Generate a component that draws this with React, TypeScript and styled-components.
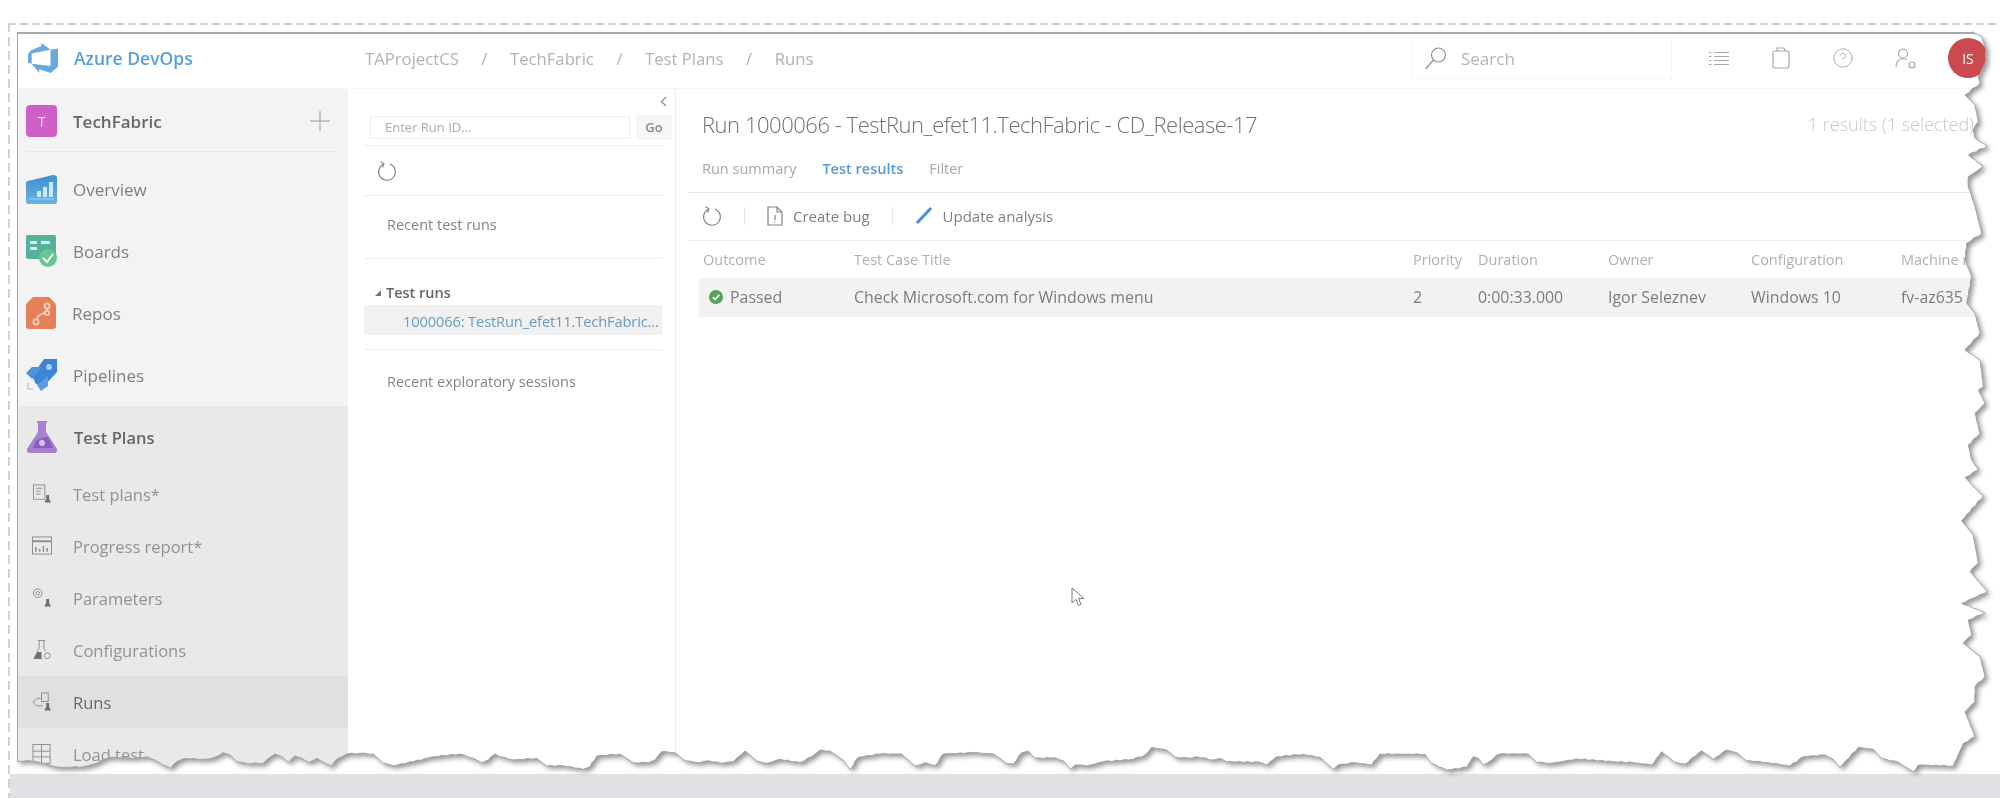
import React from "react";
import styled, { createGlobalStyle } from "styled-components";
import { CircleHelp } from "lucide-react";

const GlobalStyle = createGlobalStyle`
  html, body { margin: 0; padding: 0; background: #fff; }
  body { font-family: "Open Sans", "Noto Sans", sans-serif; color: #666; }
`;

const Page = styled.div`
  position: relative;
  width: 2000px;
  height: 798px;
  overflow: hidden;
  background: #fff;
`;

const Frame = styled.div`
  box-sizing: border-box;
  height: 798px;
  margin-top: 0;
  padding: 32px 0 0 2px;
  margin-left: 8px;
  display: grid;
  grid-template-rows: 1fr 24px;
  background:
    repeating-linear-gradient(90deg, #d2d2d2 0 8px, transparent 8px 12px) 0 23px / 100% 2px no-repeat,
    repeating-linear-gradient(180deg, #d2d2d2 0 9px, transparent 9px 14px) 0 23px / 2px 100% no-repeat;
`;

const Window = styled.div`
  margin-left: 7px;
  min-height: 0;
  overflow: hidden;
  box-sizing: border-box;
  border-top: 2px solid #a8a8a8;
  border-left: 1px solid #a0a0a0;
  display: grid;
  grid-template-rows: 55px 1fr;
  background: #fff;
  filter: blur(0.7px);
`;

const Band = styled.div`
  background: #e0e2e6;
  margin-left: 0;
`;

/* top bar */
const Header = styled.header`
  display: flex;
  align-items: center;
  padding: 0 12px 6px 0;
  border-bottom: 1px solid #f4f4f4;
`;

const Brand = styled.div`
  width: 347px;
  padding-left: 10px;
  box-sizing: border-box;
  display: flex;
  align-items: center;
  gap: 16px;
  color: #5a9fd6;
  font-size: 17.5px;
  font-weight: 600;
`;

const Crumbs = styled.nav`
  display: flex;
  align-items: center;
  gap: 22.5px;
  font-size: 16.7px;
  color: #b2b2b2;
`;

const SearchBox = styled.div`
  margin-left: auto;
  margin-right: 16px;
  width: 260px;
  height: 42px;
  box-sizing: border-box;
  border: 1px solid #f6f6f6;
  display: flex;
  align-items: center;
  gap: 14px;
  padding-left: 11px;
  font-size: 17px;
  color: #b4b4b4;
`;

const ToolSlot = styled.div`
  width: 62px;
  display: flex;
  justify-content: center;
  color: #a8a8a8;
`;

const Avatar = styled.div`
  width: 40px;
  height: 40px;
  margin-left: 12px;
  border-radius: 50%;
  background: #cb4a50;
  color: #fff;
  font-size: 14px;
  display: flex;
  align-items: center;
  justify-content: center;
`;

/* three columns under the bar */
const Body = styled.div`
  display: grid;
  grid-template-columns: 330px 327px 1fr;
  min-height: 0;
`;

const Sidebar = styled.aside`
  background: #f3f3f3;
  display: flex;
  flex-direction: column;
`;

const ProjectRow = styled.div`
  height: 63px;
  margin: 0 12px 0 8px;
  padding-top: 2px;
  box-sizing: border-box;
  border-bottom: 1px solid #e8e8e8;
  display: flex;
  align-items: center;
  gap: 16px;
  font-size: 17px;
  font-weight: 600;
  color: #666;
`;

const ProjectTile = styled.div`
  width: 31px;
  height: 32px;
  border-radius: 4px;
  background: #cf5fc4;
  color: #fff;
  font-size: 14px;
  font-weight: 400;
  display: flex;
  align-items: center;
  justify-content: center;
`;

const AddButton = styled.div`
  margin-left: auto;
  margin-right: 6px;
  display: flex;
  color: #a0a0a0;
`;

const NavList = styled.div`
  padding-top: 6px;
`;

const NavItem = styled.div`
  height: 62px;
  padding-left: 8px;
  display: flex;
  align-items: center;
  gap: 16px;
  font-size: 17px;
  color: #7f7f7f;
`;

const OpenSection = styled.div`
  flex: 1;
  background: #e9e9e9;
`;

const OpenHead = styled(NavItem)`
  color: #666;
  font-weight: 600;
  font-size: 16.5px;
`;

const SubItem = styled.div<{ $current?: boolean }>`
  height: 52px;
  padding-left: 14px;
  display: flex;
  align-items: center;
  gap: 21px;
  font-size: 16.5px;
  color: ${(p) => (p.$current ? "#6a6a6a" : "#929292")};
  background: ${(p) => (p.$current ? "#e0e0e0" : "transparent")};
`;

const SubIconBox = styled.span`
  width: 20px;
  display: flex;
  justify-content: center;
  color: #777;
`;

/* run list column */
const RunPanel = styled.section`
  padding: 0 13px 0 16px;
  font-size: 14.5px;
  color: #848484;
`;

const CollapseRow = styled.div`
  height: 25px;
  display: flex;
  align-items: center;
  justify-content: flex-end;
  margin-right: -5px;
  color: #8c8c8c;
`;

const RunSearch = styled.div`
  margin: 0 -10px 0 6px;
  display: flex;
  align-items: center;
  gap: 6px;
  padding-bottom: 5px;
`;

const RunInput = styled.div`
  width: 260px;
  height: 23px;
  box-sizing: border-box;
  border: 1px solid #efefef;
  padding-left: 14px;
  font-size: 13px;
  line-height: 21px;
  color: #acacac;
`;

const GoButton = styled.div`
  width: 36px;
  height: 26px;
  background: #f6f6f6;
  color: #8a8a8a;
  font-size: 13px;
  font-weight: 600;
  text-align: center;
  line-height: 26px;
`;

const RunSection = styled.div<{ $height: number }>`
  box-sizing: border-box;
  height: ${(p) => p.$height}px;
  border-top: 1px solid #ededed;
  display: flex;
  align-items: center;
  padding-left: 23px;
`;

const RecentSection = styled(RunSection)`
  padding-bottom: 5px;
`;

const RefreshSection = styled(RunSection)`
  padding-left: 13px;
`;

const GroupSection = styled.div`
  box-sizing: border-box;
  height: 91px;
  border-top: 1px solid #ededed;
  padding-top: 21px;
`;

const GroupTitle = styled.div`
  height: 25px;
  display: flex;
  align-items: center;
  gap: 5px;
  padding-left: 11px;
  color: #666;
  font-weight: 600;
`;

const Caret = styled.span`
  width: 0;
  height: 0;
  border-left: 6px solid transparent;
  border-bottom: 6px solid #777;
`;

const GroupRow = styled.div`
  height: 30px;
  line-height: 33px;
  background: #f1f1f1;
  padding-left: 39px;
  color: #6a9bbd;
  white-space: nowrap;
  font-size: 14.7px;
  letter-spacing: -0.15px;
`;

/* results column */
const ResultPanel = styled.main`
  border-left: 1px solid #efefef;
  padding-left: 12px;
  min-width: 0;
`;

const TitleRow = styled.div`
  margin-top: 5px;
  height: 61px;
  padding: 0 16px 2px 14px;
  box-sizing: border-box;
  margin-right: 10px;
  display: flex;
  align-items: center;
  justify-content: space-between;
`;

const RunTitle = styled.h1`
  margin: 0;
  font-size: 22px;
  font-weight: 300;
  letter-spacing: -0.47px;
  color: #707070;
  white-space: nowrap;
`;

const ResultCount = styled.span`
  font-size: 18px;
  font-weight: 300;
  color: #c8c8c8;
  white-space: nowrap;
`;

const Tabs = styled.div`
  height: 38px;
  box-sizing: border-box;
  padding: 0 0 11px 14px;
  border-bottom: 1px solid #e8e8e8;
  display: flex;
  align-items: center;
  gap: 26px;
  font-size: 14.5px;
  color: #a8a8a8;
`;

const Tab = styled.span<{ $active?: boolean }>`
  color: ${(p) => (p.$active ? "#5a9ad2" : "inherit")};
  font-weight: ${(p) => (p.$active ? 600 : 400)};
`;

const Toolbar = styled.div`
  height: 48px;
  box-sizing: border-box;
  padding: 0 0 2px 14px;
  border-bottom: 1px solid #eee;
  display: flex;
  align-items: center;
  font-size: 15px;
  color: #7e7e7e;
`;

const ToolSep = styled.span`
  width: 1px;
  height: 18px;
  background: #e6e6e6;
  margin: 0 22px;
`;

const ToolAction = styled.span`
  display: flex;
  align-items: center;
  gap: 10px;
`;

const ResultGrid = styled.div`
  margin-left: 11px;
  display: grid;
  grid-template-columns: 155px 559px 65px 130px 143px 150px 1fr;
`;

const HeadCell = styled.div`
  height: 37px;
  display: flex;
  align-items: center;
  font-size: 14.5px;
  color: #afafaf;
  white-space: nowrap;
  &:first-child { padding-left: 4px; }
`;

const Cell = styled.div`
  height: 39px;
  box-sizing: border-box;
  padding-bottom: 2px;
  background: #f2f2f2;
  display: flex;
  align-items: center;
  gap: 7px;
  font-size: 15.9px;
  color: #7c7c7c;
  white-space: nowrap;
`;

const OutcomeCell = styled(Cell)`
  padding-left: 10px;
`;

/* torn paper edge drawn over the screenshot */
const TearLayer = styled.svg`
  position: absolute;
  inset: 0;
  pointer-events: none;
`;

const Pointer = styled.svg`
  position: absolute;
  left: 1071px;
  top: 587px;
`;

type Pt = [number, number];

const at = (ox: number, oy: number, pts: Pt[]): Pt[] =>
  pts.map(([x, y]) => [ox + x / 3, oy + y / 3] as Pt);

const rightEdge: Pt[] = [
  ...at(1900, 20, [
    [215, 35], [245, 50], [258, 90], [255, 130], [235, 170], [240, 190], [195, 225], [225, 255], [235, 305],
    [220, 330], [225, 355], [262, 378], [205, 405], [250, 440], [205, 470], [205, 500], [225, 560], [245, 640],
    [200, 670], [195, 720], [215, 770], [200, 850], [225, 880], [240, 940], [195, 990], [240, 1020], [250, 1100],
  ]),
  ...at(1900, 390, [
    [235, 0], [255, 40], [225, 70], [240, 130], [205, 165], [215, 210], [235, 240], [195, 262], [225, 295],
    [250, 318], [185, 392], [220, 435], [235, 520], [210, 545], [262, 605], [185, 640], [255, 668], [205, 690],
    [215, 735], [190, 760], [240, 800], [255, 860], [225, 890], [225, 935], [195, 965], [225, 1040], [190, 1060],
  ]),
];

const bottomEdge: Pt[] = [
  ...at(1500, 730, [
    [1360, 108], [1255, 105], [1240, 125], [1195, 97], [1145, 85], [1120, 58], [1075, 52], [1020, 112], [1000, 88],
    [975, 75], [910, 80], [870, 108], [800, 97], [740, 92], [710, 68], [680, 60], [640, 88], [605, 62], [555, 102],
    [525, 97], [485, 65], [455, 105], [400, 98], [340, 95], [230, 87], [155, 100], [110, 97], [85, 72], [0, 72],
  ]),
  ...at(1000, 730, [
    [1490, 75], [1475, 90], [1450, 105], [1435, 85], [1420, 80], [1400, 112], [1340, 120], [1295, 100], [1275, 73],
    [1140, 72], [1115, 105], [1065, 98], [1015, 105], [1000, 118], [960, 82], [910, 73], [830, 80], [800, 105],
    [780, 97], [680, 95], [660, 85], [640, 90], [590, 80], [570, 85], [525, 82], [500, 60], [455, 52], [435, 75],
    [400, 88], [310, 95], [260, 108], [225, 105], [212, 117], [190, 92], [165, 83], [105, 85], [85, 63], [65, 68],
    [40, 102], [20, 100], [0, 85],
  ]),
  ...at(500, 730, [
    [1480, 72], [1420, 68], [1330, 72], [1305, 107], [1275, 98], [1245, 108], [1205, 72], [1140, 72], [1075, 82],
    [1050, 118], [1030, 90], [990, 63], [960, 60], [935, 80], [900, 98], [840, 88], [800, 100], [770, 92], [735, 63],
    [700, 95], [665, 100], [625, 92], [600, 98], [555, 92], [525, 68], [485, 65], [465, 90], [445, 98], [400, 98],
    [360, 72], [290, 78], [270, 110], [250, 118], [190, 107], [140, 108], [110, 85], [40, 90], [0, 80],
  ]),
  ...at(0, 730, [
    [1485, 72], [1465, 90], [1445, 98], [1420, 85], [1380, 72], [1300, 80], [1240, 95], [1180, 107], [1150, 100],
    [1120, 72], [1080, 70], [1040, 72], [1010, 88], [995, 108], [975, 100], [950, 85], [925, 97], [905, 85], [885, 78],
    [865, 97], [845, 80], [825, 72], [805, 85], [790, 100], [740, 100], [710, 95], [690, 75], [670, 68], [645, 82],
    [610, 88], [555, 85], [530, 95], [512, 115], [490, 105], [465, 90], [440, 80], [400, 85], [345, 82], [320, 85],
    [290, 100], [250, 110], [200, 112], [165, 110], [130, 100], [95, 93], [50, 93],
  ]),
];

// fine grain so the long straight pieces of the tear look ripped
const roughen = (pts: Pt[]): Pt[] => {
  const out: Pt[] = [];
  pts.forEach((p, i) => {
    out.push(p);
    const next = pts[i + 1];
    if (!next) return;
    const steps = Math.floor(Math.hypot(next[0] - p[0], next[1] - p[1]) / 4);
    for (let s = 1; s < steps; s++) {
      const t = s / steps;
      const wob = Math.sin(i * 7.3 + s * 2.9) * 0.55;
      out.push([p[0] + (next[0] - p[0]) * t + wob * 0.6, p[1] + (next[1] - p[1]) * t + wob]);
    }
  });
  return out;
};

const edge = roughen([...rightEdge, ...bottomEdge]);
const line = edge.map(([x, y]) => `${x.toFixed(1)},${y.toFixed(1)}`).join(" ");
const paper = `${line} 17,761 17,32`;
const offcut = (bottom: number) => `${line} 17,${bottom} 2000,${bottom} 2000,32`;

const TornEdge = () => (
  <TearLayer width="2000" height="798" viewBox="0 0 2000 798">
    <defs>
      <filter id="tearBlur" x="-5%" y="-5%" width="110%" height="110%">
        <feGaussianBlur stdDeviation="2.4" />
      </filter>
      <clipPath id="tearClip">
        <polygon points={offcut(786)} />
      </clipPath>
    </defs>
    <polygon points={offcut(774)} fill="#fff" />
    <g clipPath="url(#tearClip)">
      <polygon points={paper} fill="#555" opacity="0.62" transform="translate(3 3)" filter="url(#tearBlur)" />
    </g>
    <polyline points={line} fill="none" stroke="#a0a0a0" strokeWidth="0.9" />
  </TearLayer>
);

const AzureLogo = () => (
  <svg width="30" height="30" viewBox="0 0 24 24" fill="#6aa9dc">
    <path d="M0 8.877 2.247 5.91l8.405-3.416V.022l7.37 5.393L2.966 8.338v8.225L0 15.707zm24-4.45v14.651l-5.753 4.9-9.303-3.057v3.056l-5.978-7.416 15.057 1.798V5.415z" />
  </svg>
);

const Refresh = () => (
  <svg width="20" height="21" viewBox="0 0 20 21" fill="none" stroke="#808080" strokeWidth="1.1">
    <path d="M6.5 4.2A8.4 8.4 0 1 0 13 4" />
    <path d="M3.5 1.4 7 4l-1.6 3.6" />
  </svg>
);

const OverviewIcon = () => (
  <svg width="31" height="30" viewBox="0 0 31 30">
    <defs>
      <linearGradient id="ovr" x1="0" y1="0" x2="0" y2="1">
        <stop offset="0" stopColor="#3f8fd0" />
        <stop offset="1" stopColor="#69b4e4" />
      </linearGradient>
    </defs>
    <path d="M2 7 27 1q4 0 4 3v24q0 2-2 2H2q-2 0-2-2V9q0-2 2-2z" fill="url(#ovr)" />
    <path d="M11 17h4v6h-4zM17 13h4v10h-4zM23 8h4v15h-4z" fill="#cfe6f6" />
    <path d="M4 25h24" stroke="#9fd0ee" />
  </svg>
);

const BoardsIcon = () => (
  <svg width="31" height="32" viewBox="0 0 31 32">
    <path d="M2 0h26q2 0 2 2v20q0 2-2 2H2q-2 0-2-2V2q0-2 2-2z" fill="#57b09a" />
    <path d="M4 6h7v3H4zM4 12h7v3H4zM15 6h9v3h-9z" fill="#d5efe8" />
    <circle cx="22" cy="23" r="9" fill="#63c78f" />
    <path d="m17 23 4 4 6-8" fill="none" stroke="#fff" strokeWidth="2" />
  </svg>
);

const ReposIcon = () => (
  <svg width="30" height="32" viewBox="0 0 30 32">
    <path d="M7 0h16l6 6q1 1 1 3v20q0 3-3 3H3q-3 0-3-3V9q0-3 2-4z" fill="#e58059" />
    <g fill="none" stroke="#f7d3c4" strokeWidth="1.6">
      <circle cx="21" cy="9" r="2.6" />
      <circle cx="10" cy="25" r="2.6" />
      <circle cx="21" cy="16" r="2.2" />
      <path d="M11 22C11 16 20 18 21 12" />
    </g>
  </svg>
);

const PipelinesIcon = () => (
  <svg width="31" height="32" viewBox="0 0 31 32">
    <path d="M18 0h13v13L18 27l-8-2-4-8z" fill="#3d84d6" />
    <path d="M6 8h10L6 20 0 14z" fill="#4d92dd" />
    <path d="M22 17v10l-7 5-4-6z" fill="#5b9ee3" />
    <circle cx="23" cy="8" r="3" fill="#a9cdf1" />
    <path d="M2 24v6h5" stroke="#9fb6cc" fill="none" />
  </svg>
);

const FlaskIcon = () => (
  <svg width="32" height="32" viewBox="0 0 32 32">
    <path d="M11 0h10v2h-1v9l11 17q1 4-3 4H4q-4 0-3-4l11-17V2h-1z" fill="#a77fd3" />
    <path d="M10 20q6-4 12-4l5 11H7z" fill="#8a5cc0" />
    <circle cx="16" cy="22" r="3" fill="#d4bfe9" />
  </svg>
);

const SubIcon = ({ kind }: { kind: string }) => {
  const flask = <path d="M15 12h3v4l2 4h-7l2-4z" fill="#6f6f6f" stroke="none" />;
  return (
    <svg width="21" height="22" viewBox="0 0 21 22" fill="none" stroke="#8c8c8c" strokeWidth="1">
      {kind === "plans" && (
        <>
          <rect x="1.5" y="1.5" width="12" height="15" />
          <path d="M4 5h7M4 8h5M4 11h5" />
          {flask}
        </>
      )}
      {kind === "report" && (
        <>
          <rect x="0.5" y="1.5" width="20" height="18" />
          <path d="M.5 6h20" strokeWidth="2" />
          <path d="M4 17v-5M8 17v-3M12 17v-6M16 17v-4" strokeWidth="1.6" />
        </>
      )}
      {kind === "params" && (
        <>
          <circle cx="6" cy="6" r="4.5" />
          <circle cx="6" cy="6" r="1.8" />
          {flask}
        </>
      )}
      {kind === "configs" && (
        <>
          <path d="M6 1h8M7.5 1v8L2 20h9" />
          <path d="M12.5 1v8l1.5 3" />
          <path d="M6 13h4v7H2z" fill="#6f6f6f" stroke="none" />
          <circle cx="16" cy="17" r="3" />
        </>
      )}
      {kind === "runs" && (
        <>
          <path d="M1 11l5-4h3M1 11l4 4h6" />
          <rect x="10" y="1.5" width="7" height="9" />
          {flask}
        </>
      )}
      {kind === "load" && (
        <>
          <rect x="1" y="1" width="18" height="20" />
          <path d="M1 8h18M1 14h18M10 1v20" />
        </>
      )}
    </svg>
  );
};

const subNav = [
  { kind: "plans", label: "Test plans*" },
  { kind: "report", label: "Progress report*" },
  { kind: "params", label: "Parameters" },
  { kind: "configs", label: "Configurations" },
  { kind: "runs", label: "Runs", current: true },
  { kind: "load", label: "Load test" },
];

const columns = ["Outcome", "Test Case Title", "Priority", "Duration", "Owner", "Configuration", "Machine name"];

export default function App() {
  return (
    <Page>
      <GlobalStyle />
      <Frame>
        <Window>
          <Header>
            <Brand>
              <AzureLogo />
              Azure DevOps
            </Brand>
            <Crumbs>
              <span>TAProjectCS</span>
              <span>/</span>
              <span>TechFabric</span>
              <span>/</span>
              <span>Test Plans</span>
              <span>/</span>
              <span>Runs</span>
            </Crumbs>
            <SearchBox>
              <svg width="23" height="23" viewBox="0 0 23 23" fill="none" stroke="#8f8f8f" strokeWidth="1.2">
                <circle cx="14.5" cy="8" r="7" />
                <path d="M9.5 13 1.5 22" />
              </svg>
              Search
            </SearchBox>
            <ToolSlot>
              <svg width="20" height="15" viewBox="0 0 20 15" fill="none" stroke="#a8a8a8" strokeWidth="1.2">
                <path d="M5 1.5h15M5 5.5h15M5 9.5h15M5 13.5h15M0 1.5h2.5M0 5.5h2.5M0 9.5h2.5M0 13.5h2.5" />
              </svg>
            </ToolSlot>
            <ToolSlot>
              <svg width="18" height="22" viewBox="0 0 18 22" fill="none" stroke="#a8a8a8" strokeWidth="1.2">
                <rect x="1" y="4" width="16" height="17" rx="2" />
                <path d="M5 4V1h7l1 3" />
              </svg>
            </ToolSlot>
            <ToolSlot>
              <CircleHelp size={22} strokeWidth={1} />
            </ToolSlot>
            <ToolSlot>
              <svg width="21" height="21" viewBox="0 0 21 21" fill="none" stroke="#a8a8a8" strokeWidth="1.2">
                <circle cx="8" cy="5.5" r="4.5" />
                <path d="M1 19c0-5 3-8 7-8.5 2 0 3 .6 4 1.4" />
                <circle cx="17" cy="17" r="3" />
              </svg>
            </ToolSlot>
            <Avatar>IS</Avatar>
          </Header>

          <Body>
            <Sidebar>
              <ProjectRow>
                <ProjectTile>T</ProjectTile>
                TechFabric
                <AddButton>
                  <svg width="20" height="20" viewBox="0 0 20 20" stroke="#9a9a9a" strokeWidth="1">
                    <path d="M10 0v20M0 10h20" />
                  </svg>
                </AddButton>
              </ProjectRow>
              <NavList>
                <NavItem>
                  <OverviewIcon />
                  Overview
                </NavItem>
                <NavItem>
                  <BoardsIcon />
                  Boards
                </NavItem>
                <NavItem>
                  <ReposIcon />
                  Repos
                </NavItem>
                <NavItem>
                  <PipelinesIcon />
                  Pipelines
                </NavItem>
              </NavList>
              <OpenSection>
                <OpenHead>
                  <FlaskIcon />
                  Test Plans
                </OpenHead>
                {subNav.map((item) => (
                  <SubItem key={item.label} $current={item.current}>
                    <SubIconBox>
                      <SubIcon kind={item.kind} />
                    </SubIconBox>
                    {item.label}
                  </SubItem>
                ))}
              </OpenSection>
            </Sidebar>

            <RunPanel>
              <CollapseRow>
                <svg width="7" height="11" viewBox="0 0 7 11" fill="none" stroke="#8c8c8c" strokeWidth="1.2">
                  <path d="M6 1 1.5 5.5 6 10" />
                </svg>
              </CollapseRow>
              <RunSearch>
                <RunInput>Enter Run ID...</RunInput>
                <GoButton>Go</GoButton>
              </RunSearch>
              <RefreshSection $height={50}>
                <Refresh />
              </RefreshSection>
              <RecentSection $height={63}>Recent test runs</RecentSection>
              <GroupSection>
                <GroupTitle>
                  <Caret />
                  Test runs
                </GroupTitle>
                <GroupRow>1000066: TestRun_efet11.TechFabric...</GroupRow>
              </GroupSection>
              <RunSection $height={64}>Recent exploratory sessions</RunSection>
            </RunPanel>

            <ResultPanel>
              <TitleRow>
                <RunTitle>Run 1000066 - TestRun_efet11.TechFabric - CD_Release-17</RunTitle>
                <ResultCount>1 results (1 selected)</ResultCount>
              </TitleRow>
              <Tabs>
                <Tab>Run summary</Tab>
                <Tab $active>Test results</Tab>
                <Tab>Filter</Tab>
              </Tabs>
              <Toolbar>
                <Refresh />
                <ToolSep />
                <ToolAction>
                  <svg width="16" height="20" viewBox="0 0 16 20" fill="none" stroke="#808080" strokeWidth="1.2">
                    <path d="M1 1h9l5 5v13H1z" />
                    <path d="M10 1v5h5M8 9v5M8 15.5v1" />
                  </svg>
                  Create bug
                </ToolAction>
                <ToolSep />
                <ToolAction>
                  <svg width="18" height="19" viewBox="0 0 18 19" fill="none" stroke="#4a8fd0" strokeWidth="3">
                    <path d="M2 17 16 2" />
                  </svg>
                  Update analysis
                </ToolAction>
              </Toolbar>
              <ResultGrid>
                {columns.map((c) => (
                  <HeadCell key={c}>{c}</HeadCell>
                ))}
                <OutcomeCell>
                  <svg width="14" height="14" viewBox="0 0 14 14">
                    <circle cx="7" cy="7" r="7" fill="#55a25a" />
                    <path d="m3.8 7.2 2.3 2.3 4.2-4.6" fill="none" stroke="#fff" strokeWidth="1.6" />
                  </svg>
                  Passed
                </OutcomeCell>
                <Cell>Check Microsoft.com for Windows menu</Cell>
                <Cell>2</Cell>
                <Cell>0:00:33.000</Cell>
                <Cell>Igor Seleznev</Cell>
                <Cell>Windows 10</Cell>
                <Cell>fv-az635</Cell>
              </ResultGrid>
            </ResultPanel>
          </Body>
        </Window>
        <Band />
      </Frame>
      <Pointer width="14" height="20" viewBox="0 0 14 20" fill="#fff" stroke="#7c7c7c">
        <path d="M1 1v15l4-3.5 2.5 6 2.5-1-2.5-6H13z" />
      </Pointer>
      <TornEdge />
    </Page>
  );
}
